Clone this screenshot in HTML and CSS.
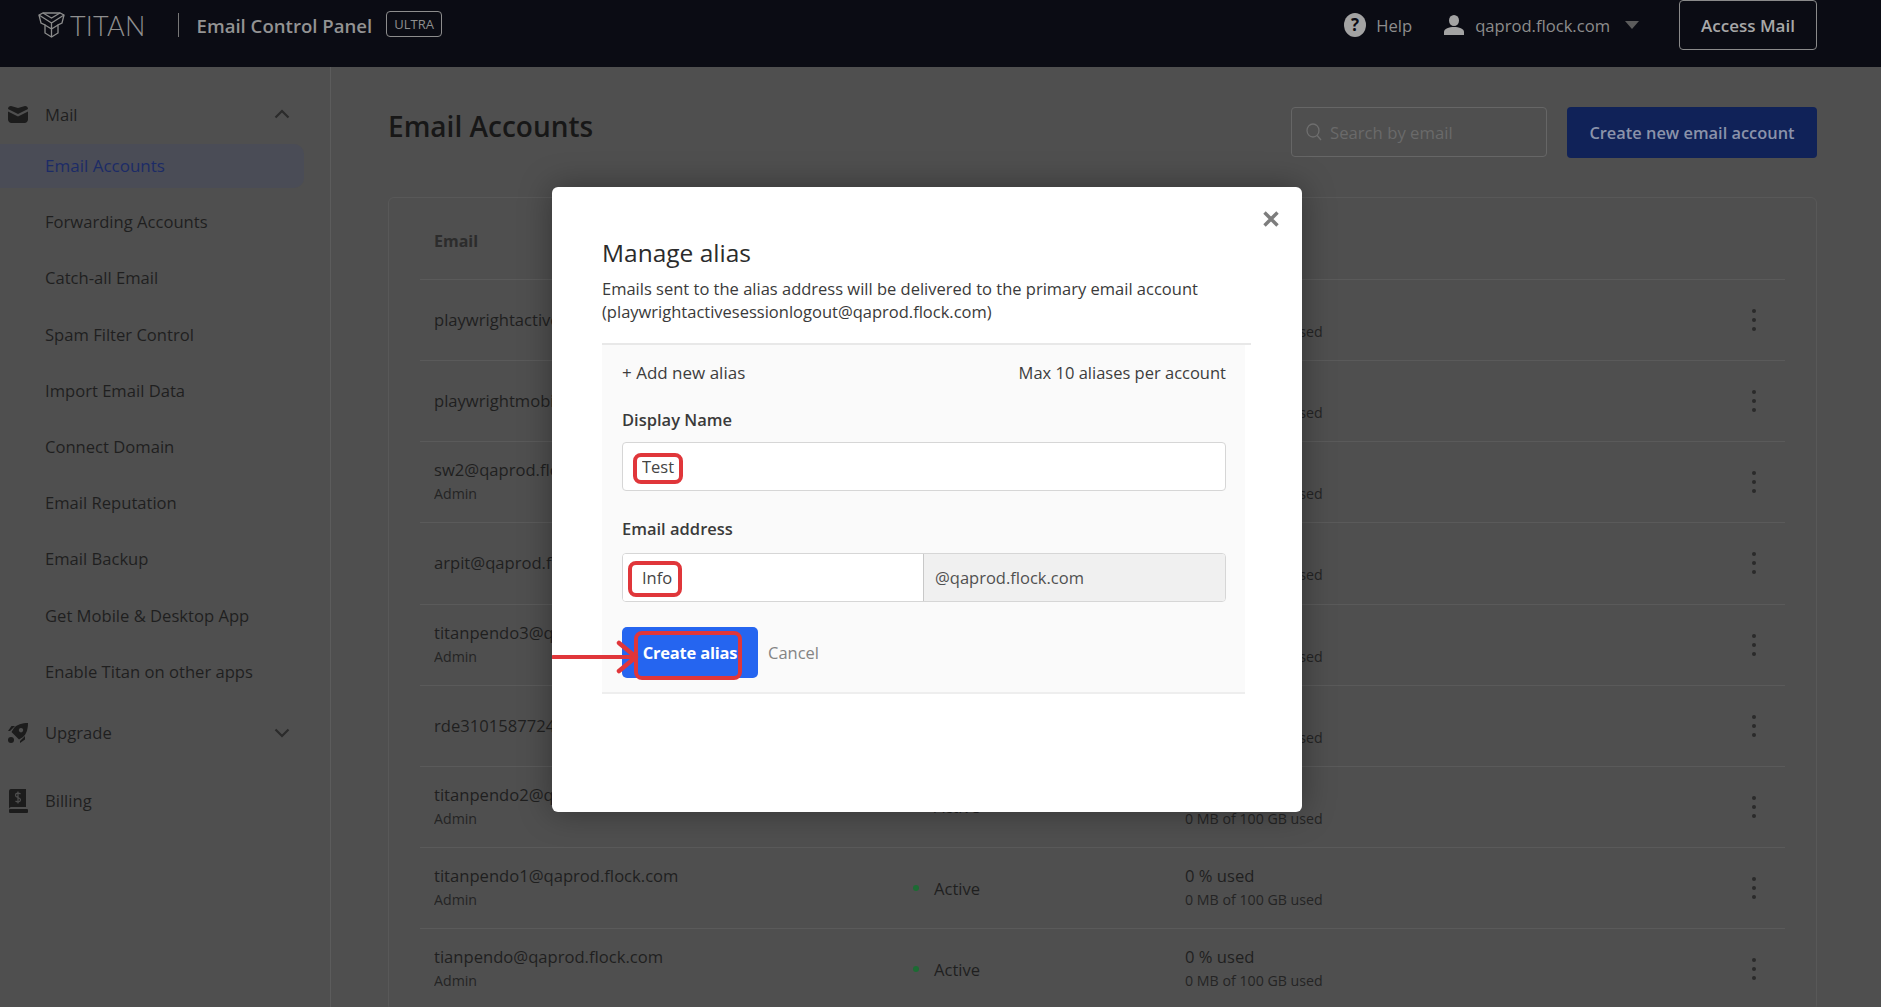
FILE: index.html
```html
<!DOCTYPE html>
<html lang="en">
<head>
  <meta charset="UTF-8">
  <title>Email Control Panel</title>
  <link rel="stylesheet" href="styles.css">
</head>
<body>
  <header class="topbar">
    <div class="brand">
      <svg class="logo" viewBox="0 0 27 26" fill="none" stroke="#8c8c8c" stroke-width="1.3">
        <path d="M1 3 L5 1 H22 L26 3 L24 11 L20 13 V21 L13.5 25 L7 21 V13 L3 11 Z"/>
        <path d="M1 3 L13.5 11 L26 3 M13.5 11 V25 M5 1 L13.5 6 L22 1 M7 13 L13.5 17 L20 13"/>
      </svg>
      <span class="logo-text">TITAN</span>
      <span class="brand-sep"></span>
      <span class="panel-name">Email Control Panel</span>
      <span class="plan-badge">ULTRA</span>
    </div>
    <div class="top-actions">
      <a class="top-link help-link">
        <svg width="22" height="24" viewBox="0 0 22 24"><ellipse cx="11" cy="12" rx="11" ry="12" fill="#a3a3a3"/><text x="11" y="18" text-anchor="middle" class="help-mark">?</text></svg>
        Help
      </a>
      <a class="top-link user-link">
        <svg width="20" height="20" viewBox="0 0 20 20" fill="#a3a3a3"><ellipse cx="10" cy="5.5" rx="5" ry="5.5"/><path d="M0 20 V17 C0 13.5 5 12 10 12 S20 13.5 20 17 V20 Z"/></svg>
        qaprod.flock.com
        <span class="caret"></span>
      </a>
      <button class="access-btn">Access Mail</button>
    </div>
  </header>

  <div class="layout">
    <nav class="sidebar">
      <div class="nav-head">
        <svg class="nav-icon" viewBox="0 0 20 17" fill="#1c1c1c"><path d="M0 3 C0 1.3 1.3 0 3 0 L10 2 L17 0 C18.7 0 20 1.3 20 3 L10 8 Z"/><path d="M0 5.4 L10 10.4 L20 5.4 V13.5 C20 15.4 18.4 17 16.5 17 H3.5 C1.6 17 0 15.4 0 13.5 Z"/></svg>
        <span>Mail</span>
        <svg class="chev" viewBox="0 0 16 10" fill="none" stroke="#2b2b2b" stroke-width="2.2"><path d="M1.5 8.5 L8 2 L14.5 8.5"/></svg>
      </div>
      <ul class="nav-list">
        <li class="active">Email Accounts</li>
        <li>Forwarding Accounts</li>
        <li>Catch-all Email</li>
        <li>Spam Filter Control</li>
        <li>Import Email Data</li>
        <li>Connect Domain</li>
        <li>Email Reputation</li>
        <li>Email Backup</li>
        <li>Get Mobile &amp; Desktop App</li>
        <li>Enable Titan on other apps</li>
      </ul>
      <div class="nav-head upgrade">
        <svg class="nav-icon tall" viewBox="0 0 20 20" fill="#1c1c1c"><path d="M6 5 C9 1.5 14 0 20 0 C20 6 18.5 11 15 14 L11 16.5 L3.5 9 Z M13 5 a2.2 2.2 0 1 0 .01 0 Z" fill-rule="evenodd"/><path d="M3.5 3 H7 L2 8 H0 Z M17 16.5 V13 L12 18 V20 Z"/><circle cx="3" cy="17" r="3"/></svg>
        <span>Upgrade</span>
        <svg class="chev" viewBox="0 0 16 10" fill="none" stroke="#2b2b2b" stroke-width="2.2"><path d="M1.5 1.5 L8 8 L14.5 1.5"/></svg>
      </div>
      <div class="nav-head billing">
        <svg class="nav-icon tall" viewBox="0 0 20 24" fill="#1c1c1c"><path d="M3 0 H18 V18 H3 C2 18 1 19 1 20 V3 C1 1.3 1.5 0 3 0 Z"/><rect x="1" y="20" width="19" height="4" rx="1"/><path d="M12.5 5 C11 3.6 7.5 3.8 7.5 6.2 C7.5 9 12.5 8 12.5 10.8 C12.5 13.2 9 13.4 7.5 12 M10 2.5 V14.5" fill="none" stroke="#4f4f4f" stroke-width="1.2"/></svg>
        <span>Billing</span>
      </div>
    </nav>

    <main class="content">
      <div class="page-head">
        <h1>Email Accounts</h1>
        <div class="page-tools">
          <label class="search">
            <svg width="16" height="18" viewBox="0 0 16 18" fill="none" stroke="#6e6e6e" stroke-width="1.3"><ellipse cx="7" cy="7.5" rx="6" ry="6.5"/><path d="M11.2 12.5 L15 17"/></svg>
            <input type="text" placeholder="Search by email">
          </label>
          <button class="create-btn">Create new email account</button>
        </div>
      </div>

      <section class="card">
        <div class="table-head">Email</div>
        <div class="row"><div class="who"><b>playwrightactivesessionlogout@qaprod.flock.com</b></div><div class="status"><i></i>Active</div><div class="usage"><b>0 % used</b><small>0 MB of 100 GB used</small></div><div class="kebab"><i></i><i></i><i></i></div></div>
        <div class="row"><div class="who"><b>playwrightmobilelogout@qaprod.flock.com</b></div><div class="status"><i></i>Active</div><div class="usage"><b>0 % used</b><small>0 MB of 100 GB used</small></div><div class="kebab"><i></i><i></i><i></i></div></div>
        <div class="row"><div class="who"><b>sw2@qaprod.flock.com</b><small>Admin</small></div><div class="status"><i></i>Active</div><div class="usage"><b>0 % used</b><small>0 MB of 100 GB used</small></div><div class="kebab"><i></i><i></i><i></i></div></div>
        <div class="row"><div class="who"><b>arpit@qaprod.flock.com</b></div><div class="status"><i></i>Active</div><div class="usage"><b>0 % used</b><small>0 MB of 100 GB used</small></div><div class="kebab"><i></i><i></i><i></i></div></div>
        <div class="row"><div class="who"><b>titanpendo3@qaprod.flock.com</b><small>Admin</small></div><div class="status"><i></i>Active</div><div class="usage"><b>0 % used</b><small>0 MB of 100 GB used</small></div><div class="kebab"><i></i><i></i><i></i></div></div>
        <div class="row"><div class="who"><b>rde3101587724@qaprod.flock.com</b></div><div class="status"><i></i>Active</div><div class="usage"><b>0 % used</b><small>0 MB of 100 GB used</small></div><div class="kebab"><i></i><i></i><i></i></div></div>
        <div class="row"><div class="who"><b>titanpendo2@qaprod.flock.com</b><small>Admin</small></div><div class="status"><i></i>Active</div><div class="usage"><b>0 % used</b><small>0 MB of 100 GB used</small></div><div class="kebab"><i></i><i></i><i></i></div></div>
        <div class="row"><div class="who"><b>titanpendo1@qaprod.flock.com</b><small>Admin</small></div><div class="status"><i></i>Active</div><div class="usage"><b>0 % used</b><small>0 MB of 100 GB used</small></div><div class="kebab"><i></i><i></i><i></i></div></div>
        <div class="row"><div class="who"><b>tianpendo@qaprod.flock.com</b><small>Admin</small></div><div class="status"><i></i>Active</div><div class="usage"><b>0 % used</b><small>0 MB of 100 GB used</small></div><div class="kebab"><i></i><i></i><i></i></div></div>
      </section>
    </main>
  </div>

  <div class="modal">
    <button class="modal-close">
      <svg width="16" height="16" viewBox="0 0 16 16" stroke="#7d7d7d" stroke-width="3.4"><path d="M1.5 1.5 L14.5 14.5 M14.5 1.5 L1.5 14.5"/></svg>
    </button>
    <h2>Manage alias</h2>
    <p class="modal-desc">Emails sent to the alias address will be delivered to the primary email account<br>(playwrightactivesessionlogout@qaprod.flock.com)</p>
    <form class="alias-form">
      <div class="form-top">
        <span class="add-alias">+ Add new alias</span>
        <span>Max 10 aliases per account</span>
      </div>
      <label class="field-label">Display Name</label>
      <input class="text-input" type="text" value="Test">
      <label class="field-label email-label">Email address</label>
      <div class="input-group">
        <input type="text" value="Info">
        <span class="domain">@qaprod.flock.com</span>
      </div>
      <div class="form-actions">
        <button type="button" class="primary-btn">Create alias</button>
        <span class="cancel">Cancel</span>
      </div>
    </form>

    <span class="mark mark-test"></span>
    <span class="mark mark-info"></span>
    <span class="mark mark-create"></span>
    <svg class="arrow" width="90" height="34" viewBox="0 0 90 34" fill="none" stroke="#e0363a" stroke-linecap="round" stroke-linejoin="round"><path d="M1 17 H82" stroke-width="4"/><path d="M67 3 L84 17 L67 31" stroke-width="4.5"/></svg>
  </div>
</body>
</html>
```

FILE: styles.css
```css
* { box-sizing: border-box; }
html, body {
  margin: 0;
  padding: 0;
  height: 100%;
  overflow: hidden;
  font-family: "Open Sans", "Noto Sans", sans-serif;
  background-color: #4f4f4f;
  color: #1f1f1f;
}
button, input { font-family: inherit; }

/* top bar */
.topbar {
  height: 67px;
  background-color: #0b0c14;
  display: flex;
  justify-content: space-between;
  align-items: flex-start;
  padding: 0 64px 0 38px;
}
.brand {
  display: flex;
  align-items: center;
  height: 50px;
}
.logo {
  width: 27px;
  height: 26px;
}
.logo-text {
  font-family: "Lato", sans-serif;
  font-weight: 300;
  font-size: 27px;
  letter-spacing: 0.2px;
  color: #8f8f8f;
  margin-left: 5px;
}
.brand-sep {
  width: 1px;
  height: 24px;
  background-color: #777;
  margin: 0 18px 0 32px;
}
.panel-name {
  font-size: 18.6px;
  font-weight: 600;
  color: #939393;
}
.plan-badge {
  border: 1px solid #8d8d8d;
  border-radius: 4px;
  color: #8e8e8e;
  font-size: 13px;
  padding: 3px 7px;
  margin: -2px 0 0 14px;
}
.top-actions {
  display: flex;
  align-items: center;
}
.top-link {
  display: flex;
  align-items: center;
  font-size: 16.6px;
  color: #8d8d8d;
}
.help-link { gap: 10px; margin-right: 32px; }
.help-mark {
  font-family: "Open Sans", sans-serif;
  font-size: 17px;
  font-weight: 700;
  fill: #0b0c14;
}
.user-link { gap: 11px; margin-right: 40px; }
.caret {
  width: 0;
  height: 0;
  border-left: 7px solid transparent;
  border-right: 7px solid transparent;
  border-top: 8px solid #5c5c5c;
  margin-left: 4px;
}
.access-btn {
  width: 138px;
  height: 50px;
  background: transparent;
  border: 1px solid #8a8a8a;
  border-radius: 4px;
  color: #a8a8a8;
  font-size: 17px;
  font-weight: 600;
}

/* page */
.layout { display: flex; height: 940px; }
.sidebar {
  width: 331px;
  flex-shrink: 0;
  border-right: 1px solid #5c5c5c;
  padding-top: 25px;
}
.nav-head {
  height: 44px;
  display: flex;
  align-items: center;
  padding: 0 40px 0 8px;
  font-size: 16.6px;
  color: #1f1f1f;
}
.nav-head span { flex: 1; margin-left: 17px; }
.nav-icon { width: 20px; height: 17px; }
.nav-icon.tall { height: 24px; }
.chev { width: 16px; height: 10px; }
.nav-list {
  list-style: none;
  margin: 8px 0 0;
  padding: 0;
  display: flex;
  flex-direction: column;
  gap: 12.2px;
}
.nav-list li {
  width: 304px;
  height: 44px;
  line-height: 44px;
  padding-left: 45px;
  font-size: 16.6px;
  color: #1f1f1f;
}
.nav-list li.active {
  background-color: #4a4c56;
  border-radius: 0 10px 10px 0;
  color: #1c2b66;
  font-size: 17px;
  font-weight: 500;
}
.upgrade { margin-top: 17px; }
.billing { margin-top: 24px; }

.content {
  flex: 1;
  padding: 40px 64px 0 57px;
  overflow: hidden;
}
.page-head {
  display: flex;
  justify-content: space-between;
  align-items: flex-start;
  margin-bottom: 39px;
}
h1 {
  margin: 0;
  font-size: 28px;
  font-weight: 600;
  line-height: 38px;
  color: #171717;
}
.page-tools { display: flex; gap: 20px; }
.search {
  width: 256px;
  height: 50px;
  display: flex;
  align-items: center;
  gap: 8px;
  padding: 0 14px;
  border: 1px solid #666;
  border-radius: 4px;
}
.search input {
  background: transparent;
  border: none;
  outline: none;
  width: 190px;
  padding: 0;
  font-size: 16.7px;
}
.search input::placeholder { color: #6a6a6a; opacity: 1; }
.create-btn {
  width: 250px;
  height: 51px;
  background-color: #102258;
  border: none;
  border-radius: 4px;
  color: #8b93aa;
  font-size: 16.4px;
  font-weight: 600;
}

.card {
  border: 1px solid #585858;
  border-radius: 6px;
  padding: 0 31px;
}
.table-head {
  height: 82px;
  padding: 32px 0 0 14px;
  font-size: 16px;
  font-weight: 700;
  color: #2c2c2c;
  border-bottom: 1px solid #5a5a5a;
}
.row {
  height: 81.15px;
  display: grid;
  grid-template-columns: 475px 276px 1fr 62px;
  align-items: center;
  padding-left: 14px;
  border-bottom: 1px solid #5a5a5a;
}
.row b {
  display: block;
  font-weight: 400;
  font-size: 16.6px;
  line-height: 24px;
  color: #1f1f1f;
}
.row small {
  display: block;
  font-size: 14.2px;
  line-height: 24px;
  color: #242424;
}
.who { white-space: nowrap; overflow: hidden; }
.status {
  display: flex;
  align-items: center;
  font-size: 16.6px;
  color: #1f1f1f;
}
.status i {
  width: 6px;
  height: 6px;
  border-radius: 50%;
  background-color: #1c6b33;
  margin: 0 15px 0 4px;
}
.kebab {
  display: flex;
  flex-direction: column;
  align-items: center;
  gap: 5px;
}
.kebab i {
  width: 4px;
  height: 4px;
  border-radius: 50%;
  background-color: #2a2a2a;
}

/* alias dialog */
.modal {
  position: absolute;
  left: 552px;
  top: 187px;
  width: 750px;
  height: 625px;
  background-color: #fff;
  border-radius: 6px;
  box-shadow: 0 0 32px rgba(0, 0, 0, 0.35);
  padding: 48px 51px 0 50px;
  color: #333;
}
.modal-close {
  position: absolute;
  top: 24px;
  right: 23px;
  background: none;
  border: none;
  padding: 0;
}
h2 {
  margin: 0 0 6px;
  font-size: 24.5px;
  font-weight: 500;
  line-height: 36px;
  color: #2b2b2b;
}
.modal-desc {
  margin: 0 0 22px;
  font-size: 16.5px;
  line-height: 23px;
  color: #3a3a3a;
}
.alias-form {
  width: 643px;
  height: 349px;
  background-color: #fafafa;
  border-bottom: 2px solid #eee;
  padding: 0 19px 0 20px;
  position: relative;
}
.alias-form::before {
  content: "";
  position: absolute;
  left: 0;
  top: -2px;
  width: 649px;
  height: 2px;
  background-color: #e8e8e8;
}
.form-top {
  display: flex;
  justify-content: space-between;
  padding-top: 16px;
  font-size: 16.5px;
  line-height: 24px;
  color: #3d3d3d;
}
.add-alias { font-size: 17px; }
.field-label {
  display: block;
  margin-top: 23px;
  font-size: 16.5px;
  font-weight: 600;
  line-height: 24px;
  color: #3a3a3a;
}
.email-label { margin-top: 26px; }
.text-input, .input-group {
  display: flex;
  width: 604px;
  height: 49px;
  margin-top: 10px;
  border: 1.5px solid #d6d6d6;
  border-radius: 4px;
  background-color: #fff;
  font-size: 16.5px;
  color: #444;
}
.text-input { padding: 0 0 0 19px; outline: none; }
.input-group { overflow: hidden; margin-top: 12px; }
.input-group input {
  width: 301px;
  border: none;
  border-right: 1px solid #c8c8c8;
  outline: none;
  padding: 0 0 0 19px;
  font-size: 16.5px;
  color: #444;
}
.domain {
  flex: 1;
  background-color: #f0f0f0;
  padding-left: 11px;
  line-height: 47px;
  color: #505050;
}
.form-actions {
  display: flex;
  align-items: center;
  margin-top: 25px;
}
.primary-btn {
  width: 136px;
  height: 51px;
  background-color: #2565f0;
  border: none;
  border-radius: 5px;
  color: #fff;
  font-size: 16.5px;
  font-weight: 700;
  letter-spacing: -0.2px;
}
.cancel {
  margin-left: 10px;
  font-size: 16.5px;
  color: #848484;
}

/* red annotations drawn on the screenshot */
.mark {
  position: absolute;
  border: 4px solid #e0363a;
  border-radius: 8px;
}
.mark-test { left: 81px; top: 266px; width: 50px; height: 31px; }
.mark-info { left: 76px; top: 374px; width: 54px; height: 36px; }
.mark-create { left: 82px; top: 444px; width: 108px; height: 49px; }
.arrow { position: absolute; left: 0; top: 453px; }
```
